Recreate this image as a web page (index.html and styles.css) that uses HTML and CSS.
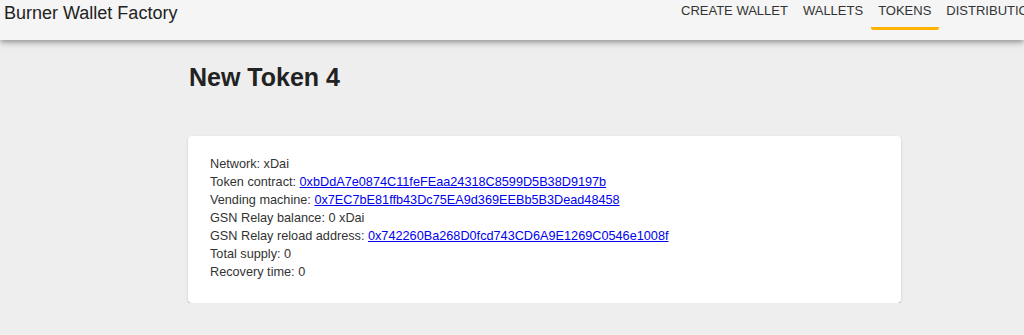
FILE: index.html
```html
<!DOCTYPE html>
<html lang="en">
<head>
    <meta charset="utf-8">
    <title>Burner Wallet Factory</title>
    <link rel="stylesheet" href="styles.css">
</head>
<body>
    <header class="appbar">
        <div class="brand">Burner Wallet Factory</div>
        <nav class="tabs">
            <a class="tab" href="#">Create Wallet</a>
            <a class="tab" href="#">Wallets</a>
            <a class="tab active" href="#">Tokens</a>
            <a class="tab" href="#">Distribution</a>
        </nav>
    </header>

    <div class="container">
        <h1>New Token 4</h1>

        <div class="card">
            <div>Network: xDai</div>
            <div>Token contract: <a href="#">0xbDdA7e0874C11feFEaa24318C8599D5B38D9197b</a></div>
            <div>Vending machine: <a href="#">0x7EC7bE81ffb43Dc75EA9d369EEBb5B3Dead48458</a></div>
            <div>GSN Relay balance: 0 xDai</div>
            <div>GSN Relay reload address: <a href="#">0x742260Ba268D0fcd743CD6A9E1269C0546e1008f</a></div>
            <div>Total supply: 0</div>
            <div>Recovery time: 0</div>
        </div>
    </div>
</body>
</html>
```

FILE: styles.css
```css
body {
    margin: 0;
    background-color: #eeeeee;
    color: rgba(0, 0, 0, 0.87);
    font-family: "Liberation Sans", Arial, sans-serif;
    overflow: hidden;
}
.appbar {
    display: flex;
    align-items: flex-start;
    height: 40px;
    padding-left: 4px;
    background-color: #f5f5f5;
    box-shadow: 0 2px 4px -1px rgba(0, 0, 0, 0.2), 0 4px 5px 0 rgba(0, 0, 0, 0.14), 0 1px 10px 0 rgba(0, 0, 0, 0.12);
    overflow: hidden;
    white-space: nowrap;
    position: relative;
}
.brand {
    flex-shrink: 0;
    width: 669.5px;
    padding-top: 3px;
    font-size: 18px;
    line-height: 20px;
    color: #222222;
}
.tabs {
    display: flex;
    flex-shrink: 0;
}
.tab {
    display: block;
    padding: 1px 7.5px 6px;
    border-bottom: 3px solid transparent;
    border-radius: 0 0 2px 2px;
    font-size: 13px;
    line-height: 20px;
    text-transform: uppercase;
    text-decoration: none;
    color: #333333;
}
.tab.active {
    border-bottom-color: #ffb300;
}
.container {
    width: 713px;
    margin-left: 188px;
}
h1 {
    margin: 23px 0 45px 1px;
    font-size: 25px;
    line-height: 28px;
    font-weight: bold;
    color: #222222;
}
.card {
    padding: 19px 22px 22px;
    background-color: #ffffff;
    border-radius: 4px;
    box-shadow: 0 2px 1px -1px rgba(0, 0, 0, 0.2), 0 1px 1px 0 rgba(0, 0, 0, 0.14), 0 1px 3px 0 rgba(0, 0, 0, 0.12);
    font-size: 12.7px;
    line-height: 18px;
    color: #333333;
}
.card a {
    color: #0000ee;
}
```
